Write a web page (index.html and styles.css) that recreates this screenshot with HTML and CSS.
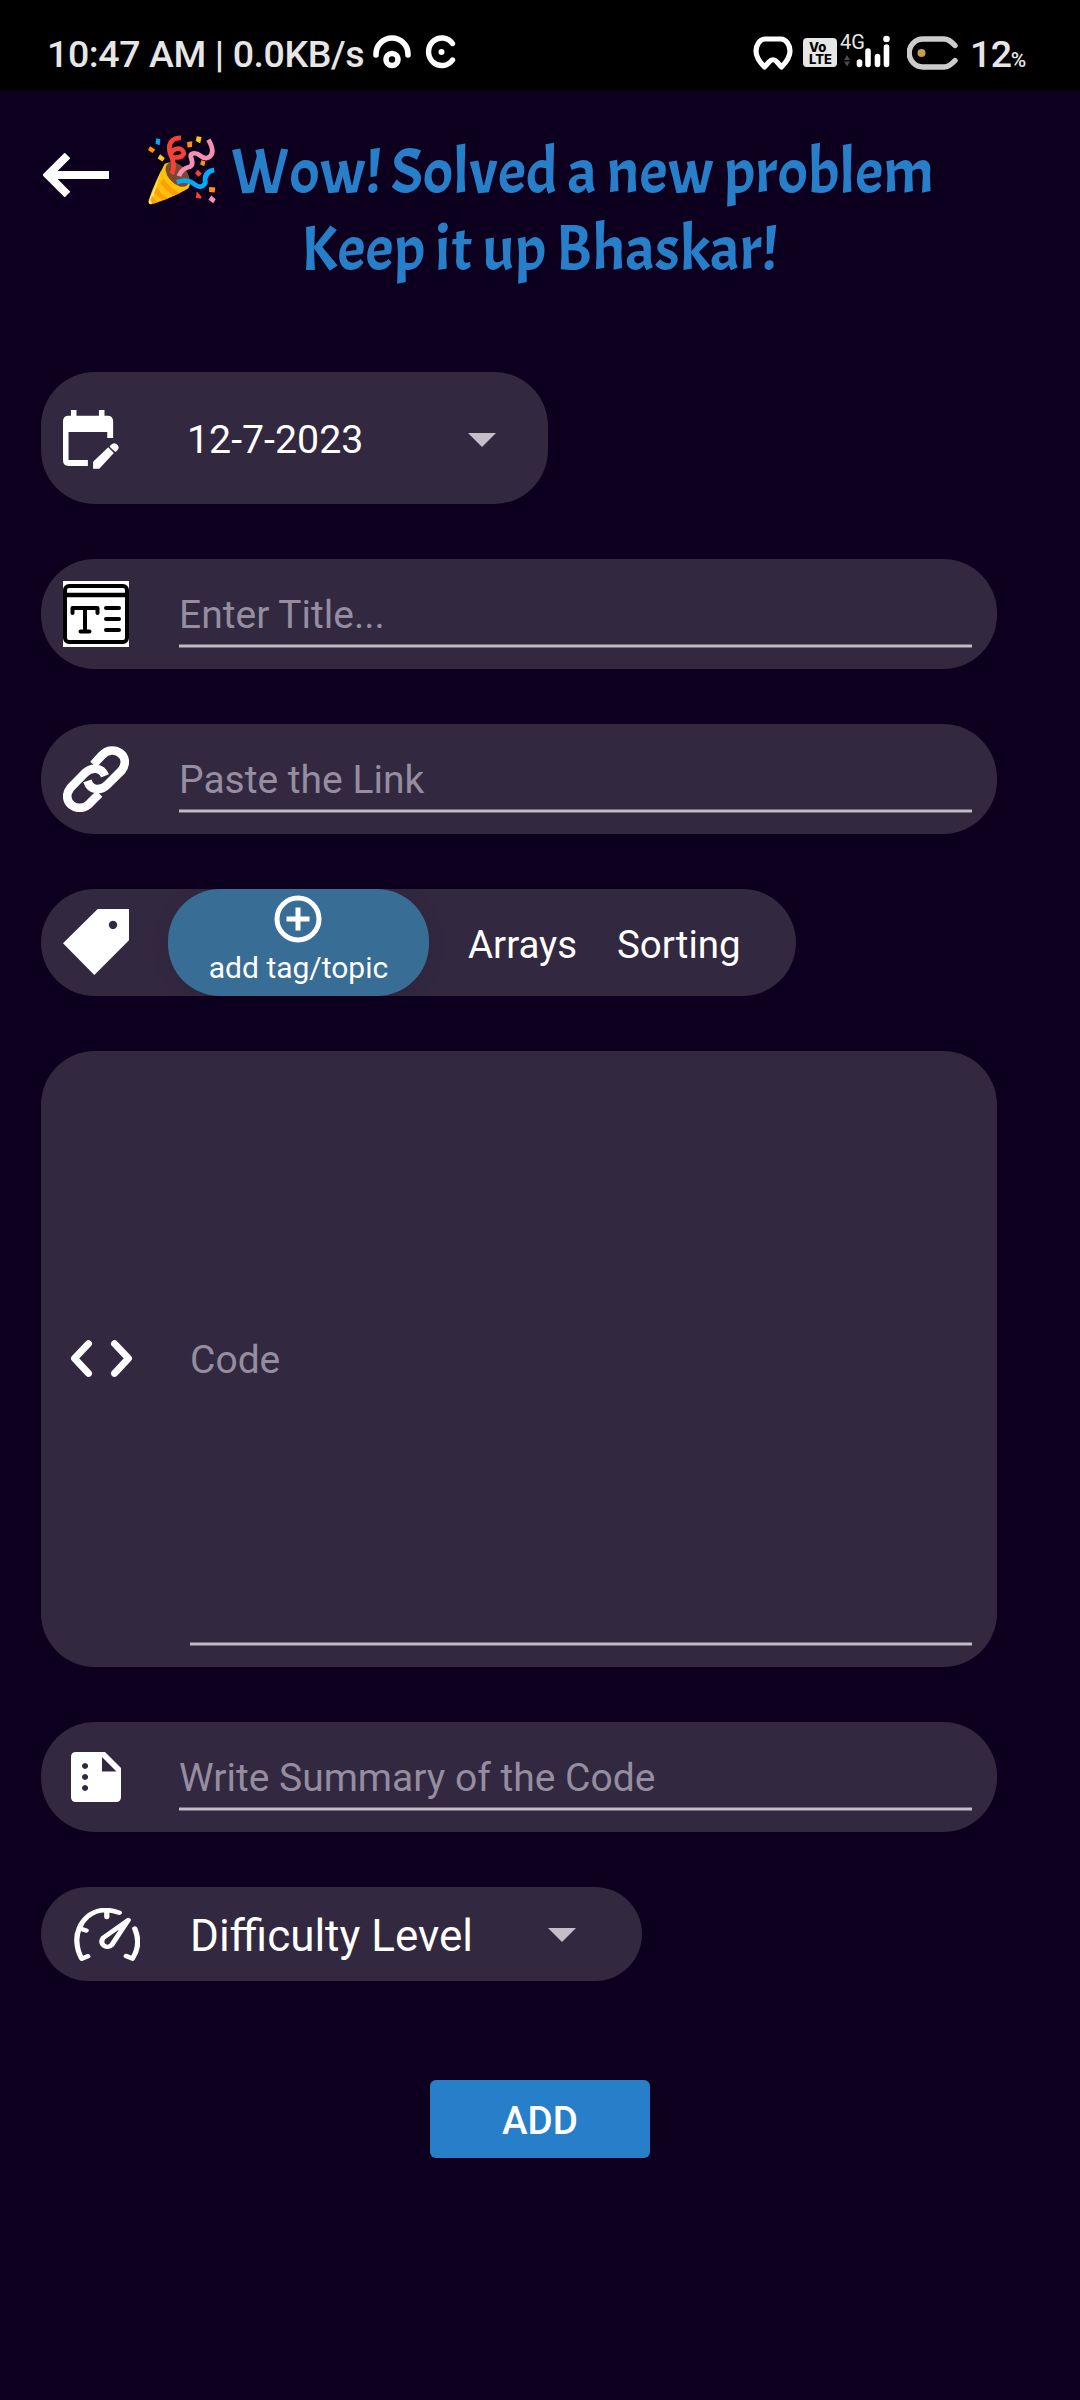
FILE: index.html
```html
<!DOCTYPE html>
<html lang="en">
<head>
<meta charset="utf-8">
<title>Add problem</title>
<link rel="stylesheet" href="styles.css">
</head>
<body>
<div class="screen">
  <header class="status">
    <span class="status-text">10:47 AM | 0.0KB/s</span>
    <svg class="st-cast" viewBox="0 0 38 34"><path d="M3 20v-1a16 16 0 0 1 32 0v1" fill="none" stroke="#fff" stroke-width="5.6" stroke-linecap="round"/><circle cx="19" cy="24.500" r="6" fill="none" stroke="#fff" stroke-width="5.600"/></svg>
    <svg class="st-c" viewBox="0 0 32 34"><path d="M27.500 8.500A13.300 13.800 0 1 0 27.500 25" fill="none" stroke="#fff" stroke-width="5.400" stroke-linecap="round"/><circle cx="16.500" cy="17" r="3" fill="#fff"/></svg>
    <span class="status-gap"></span>
    <svg class="st-pad" viewBox="0 0 40 34"><path d="M12 3h16c5 0 9 6 9 12 0 5-3 10.500-8.500 16L24 26q-4-4.500-8 0l-4.500 5C6 25.500 3 20 3 15 3 9 7 3 12 3z" fill="none" stroke="#fff" stroke-width="5.200" stroke-linejoin="round"/></svg>
    <span class="volte"><b>Vo</b><b>LTE</b></span>
    <span class="signal">
      <span class="net">4G</span>
      <svg viewBox="0 0 50 34"><path d="M4 26l3-5 3 5zM4 27.500l3 5 3-5z" transform="translate(0 -1)" fill="#4b4b4b"/><g stroke="#fff" stroke-width="5.600" stroke-linecap="round"><path d="M19.500 27v2.500M28 16v13.500M37.500 21.500v8M46.500 12v17.500"/></g><circle cx="46.500" cy="4" r="3.300" fill="#fff"/></svg>
    </span>
    <svg class="st-bat" viewBox="0 0 52 34"><path d="M48 9.500C44 5 41 3 37 3H16a13.700 13.900 0 0 0 0 28h21c4 0 7-2 11-6.500" fill="none" stroke="#ccc" stroke-width="5.400" stroke-linecap="round"/><circle cx="14.500" cy="17" r="4" fill="#c49f47"/></svg>
    <span class="percent">12<small>%</small></span>
  </header>

  <section class="heading">
    <svg class="back" viewBox="0 0 66 44"><path d="M66 22H8M24.500 2.500L5 22l19.500 19.500" fill="none" stroke="#fff" stroke-width="8"/></svg>
    <h1>
      <span class="line">
        <svg class="popper" viewBox="431 106 198 211" preserveAspectRatio="none">
          <path d="M480 193Q450 250 433 302Q431 316 440 315Q500 296 548 267Q562 246 538 213Q510 179 480 193Z" fill="#ffc107"/>
          <path d="M470 211L440 314Q434 316 433 308Z" fill="#ffe38a"/>
          <path d="M476 236Q492 264 523 281L507 289Q481 272 467 250ZM457 264Q468 285 490 297L477 303Q459 294 449 280ZM444 290Q450 302 460 309L447 313Q440 309 438 302Z" fill="#ff9d0a"/>
          <ellipse cx="517" cy="225" rx="27" ry="43" transform="rotate(-41 517 225)" fill="#7a4832"/>
          <path d="M480 196q-10 36 24 62q35 22 48 0q-5 11-22 13q-32-2-50-35q-12-26 0-40z" fill="#ffc107"/>
          <g fill="none" stroke-width="14"><path d="M500 223Q510 205 502 178Q484 139 503 121Q512 114 527 115" stroke="#f44336"/><path d="M503 173C530 177 543 162 530 151C520 141 500 151 497 164" stroke="#f44336"/><path d="M521 230Q528 208 553 202C574 190 540 164 565 161C584 160 590 183 606 174Q630 162 607 120" stroke="#f48fb1"/><path d="M515 248Q546 238 561 251Q587 273 598 250Q593 216 624 211" stroke="#03a9f4"/></g>
          <path d="M455 116l12 3-2 18-12-5z" fill="#03a9f4"/>
          <path d="M437 140l15 10-8 10-13-9zM545 127l15-2-1 17-13 2zM586 182l12 3-3 15-12-5zM609 263l18 1-2 15-16-1z" fill="#ff9110"/>
          <path d="M466 164l14 11-7 11-14-9zM573 110l14 2-4 19-13-7z" fill="#ffc31a"/>
          <path d="M576 211l12 12-10 9-10-11zM573 276l14 16-2 6-15-3z" fill="#f44336"/>
          <path d="M615 288l13 12-7 12-14-11z" fill="#f48fb1"/>
        </svg>
        <span class="t1">Wow! Solved a new problem</span>
      </span>
      <span class="line"><span class="t2">Keep it up Bhaskar!</span></span>
    </h1>
  </section>

  <main class="form">
    <div class="card date">
      <svg class="ic-cal" viewBox="96 150 162 177" preserveAspectRatio="none"><path fill="#fff" fill-rule="evenodd" d="M119 150h16v17h65v-17h16v17h9q16 0 16 17v50h-17v-18H112v84h56v18h-56q-16 0-16-17V184q0-17 16-17h7zM183 305l44-43 16 17-42 47h-18zM232 257q11-14 22-2 7 8-2 17l-5 4-16-16z"/></svg>
      <span class="value">12-7-2023</span>
      <svg class="caret" viewBox="0 0 28 14"><path d="M0 0h28L14 14z" fill="#c3bec7"/></svg>
    </div>

    <div class="card row">
      <svg class="ic" viewBox="0 0 66 66"><path fill="#fff" d="M0 0h66v66H0z"/><rect x="2" y="5" width="62" height="56" rx="4" fill="none" stroke="#000" stroke-width="4"/><path d="M2 14h62" stroke="#000" stroke-width="4.400"/><path d="M9.500 32v-5h25v5M22 27v23M17.500 50.500h9" fill="none" stroke="#000" stroke-width="4" stroke-linecap="round" stroke-linejoin="round"/><path d="M43 27h13M43 38h13M43 49h13" stroke="#000" stroke-width="4" stroke-linecap="round"/></svg>
      <div class="field">Enter Title...</div>
    </div>

    <div class="card row">
      <svg class="ic" viewBox="99 137 198 199"><path fill="none" stroke="#fff" stroke-width="26" d="M190 193L216 165C250 128 308 168 275 211L232 254C213 273 182 273 172 242M208 281L180 309C146 346 88 306 121 263L164 219C184 200 214 200 225 227"/></svg>
      <div class="field">Paste the Link</div>
    </div>

    <div class="card tags">
      <svg class="ic" viewBox="99 627 198 198"><path fill="#fff" fill-rule="evenodd" d="M203 627h94v94L193 825 99 730zM249 662a12.500 12.500 0 1 0 .1 0z"/></svg>
      <div class="add-tag">
        <svg viewBox="0 0 48 48"><circle cx="24" cy="24" r="21" fill="none" stroke="#fff" stroke-width="5"/><path d="M24 12.500v23M12.500 24h23" stroke="#fff" stroke-width="5"/></svg>
        <span>add tag/topic</span>
      </div>
      <span class="tag">Arrays</span>
      <span class="tag second">Sorting</span>
    </div>

    <div class="card code">
      <svg class="ic-code" viewBox="122 240 186 111"><path d="M176 251l-42 44 42 45M254 251l42 44-42 45" fill="none" stroke="#fff" stroke-width="21" stroke-linecap="round" stroke-linejoin="round"/></svg>
      <div class="field">Code</div>
    </div>

    <div class="card row summary">
      <svg class="ic-doc" viewBox="0 0 50 50"><path fill="#fff" fill-rule="evenodd" d="M5 0h29l16 16v29q0 5-5 5H5q-5 0-5-5V5q0-5 5-5zM31 5v14.500h14.500zM14 11a3 3 0 1 0 .1 0zM14 22a3 3 0 1 0 .1 0zM14 33a3 3 0 1 0 .1 0z"/></svg>
      <div class="field">Write Summary of the Code</div>
    </div>

    <div class="card difficulty">
      <svg class="ic-gauge" viewBox="107 623 163 158" preserveAspectRatio="none"><g fill="none" stroke="#fff" stroke-width="13" stroke-linejoin="round" stroke-linecap="round"><path d="M219 637C150 606 112 672 114 722Q115 751 126 774L141 767M257 684Q274 733 251 774L236 766M188 632v18M122 684l15 6"/><path d="M241 659L179 712C168 731 188 749 201 732Z"/></g></svg>
      <span class="value">Difficulty Level</span>
      <svg class="caret" viewBox="0 0 28 14"><path d="M0 0h28L14 14z" fill="#c3bec7"/></svg>
    </div>

    <button class="add">ADD</button>
  </main>
</div>
</body>
</html>
```

FILE: styles.css
```css
* { box-sizing: border-box; }
body { margin: 0; background: #0d001e; font-family: Roboto, "Liberation Sans", sans-serif; color: #fff; }
svg { display: block; flex: none; }
.screen { width: 1080px; height: 2400px; overflow: hidden; background: #0d001e; }

.status { height: 90px; background: #000; display: flex; align-items: flex-start; padding: 0 53px 0 47px; color: #e6e6e6; white-space: nowrap; }
.status-text { width: 326px; font-size: 37.500px; letter-spacing: -.4px; font-weight: 500; line-height: 44px; margin-top: 32px; }
.st-cast { width: 38px; height: 34px; margin-top: 35px; }
.st-c { width: 32px; height: 34px; margin: 35px 0 0 14px; }
.status-gap { flex: 1; }
.st-pad { width: 40px; height: 34px; margin-top: 36px; }
.volte { width: 34px; height: 29px; margin: 38px 0 0 10px; padding: 3px 0 0 6px; border-radius: 4px; background: #e6e6e6; color: #000; display: flex; flex-direction: column; font: 800 13px/12px Inter, sans-serif; }
.volte b { font-weight: 800; }
.signal { position: relative; width: 50px; margin: 35px 0 0 3px; }
.signal svg { width: 50px; height: 34px; }
.net { position: absolute; left: 0; top: -4px; font-size: 20px; line-height: 22px; }
.st-bat { width: 52px; height: 34px; margin: 36px 0 0 17px; }
.percent { width: 57px; margin: 32px 0 0 11px; font-size: 37.500px; letter-spacing: -.5px; line-height: 44px; font-weight: 500; }
.percent small { font-size: 21px; margin-left: -1px; font-weight: 500; }

.heading { height: 282px; display: flex; padding: 0 0 0 43px; }
.back { width: 66px; height: 44px; margin-top: 63px; }
h1 { margin: 44px 0 0 39px; width: 800px; font-family: Acme, "Open Sans", sans-serif; font-size: 63px; font-weight: 400; color: #267fc8; }
.line { height: 77px; display: flex; line-height: 77px; white-space: nowrap; }
.popper { width: 68px; height: 70px; margin-top: 1px; }
.t1 { margin-left: 15px; }
.t2 { margin-left: 153px; }

.form { padding-left: 41px; display: flex; flex-direction: column; align-items: flex-start; gap: 55px; }
.card { display: flex; align-items: flex-start; background: #322840; border-radius: 54px; font-size: 38.5px; white-space: nowrap; padding-left: 22px; }
.value, .tag { line-height: 46px; }
.ic { width: 66px; height: 66px; }

.date { width: 507px; height: 132px; align-items: center; font-size: 39.300px; }
.ic-cal { width: 56px; height: 59px; margin-top: 3px; }
.date .value { width: 281px; margin: 3px 0 0 68px; }
.caret { width: 28px; height: 14px; margin-top: 3px; }

.row { width: 956px; height: 110px; }
.row .ic { margin-top: 22px; }
.field { width: 793px; height: 89px; margin-left: 50px; padding: 26px 0 4px; display: flex; align-items: center; font-size: 39px; color: #958da0; background: linear-gradient(#76707f 0 1px, #c1bcc8 1px 3px, #76707f 3px) bottom / 100% 4px no-repeat; }

.tags { width: 755px; height: 107px; }
.tags .ic { margin-top: 20px; }
.add-tag { width: 261px; height: 107px; margin-left: 39px; border-radius: 52px; background: #386d95; box-shadow: 0 2px 16px rgba(50, 25, 50, .18); display: flex; flex-direction: column; align-items: center; font-size: 30px; line-height: 36px; clip-path: inset(0 -20px); }
.add-tag svg { width: 48px; height: 48px; margin: 6px 1px 0 0; }
.add-tag span { margin-top: 7px; }
.tag { width: 149px; margin: 33px 0 0 39px; }
.tag.second { margin-left: 0; }

.code { width: 956px; height: 616px; padding-left: 29px; }
.ic-code { width: 63px; height: 37px; margin-top: 289px; }
.code .field { width: 782px; height: 595px; margin-left: 57px; padding-top: 26px; }

.ic-doc { width: 50px; height: 50px; margin-top: 30px; }
.summary { padding-left: 30px; }
.summary .field { margin-left: 58px; }

.difficulty { width: 601px; height: 94px; border-radius: 47px; padding-left: 33px; font-size: 44px; align-items: center; }
.ic-gauge { width: 66px; height: 53px; }
.difficulty .value { width: 358px; line-height: 52px; margin: 4px 0 0 50px; }
.difficulty .caret { margin-top: 2px; }

.add { width: 220px; height: 78px; margin: 44px 0 0 389px; border: 0; padding: 3px 0 0; border-radius: 6px; background: #267fc8; color: #fff; font: 500 38.5px/75px Roboto, sans-serif; }
```
